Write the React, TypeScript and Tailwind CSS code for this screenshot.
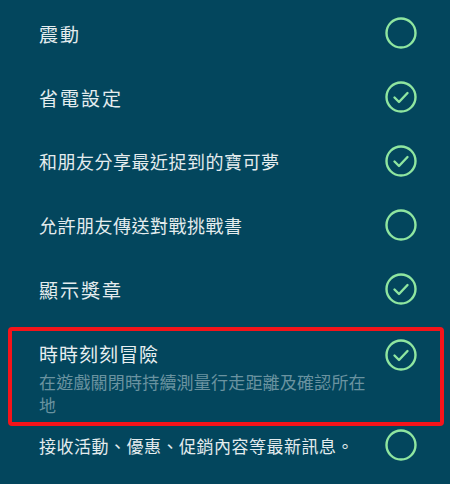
import React from "react";

const font = { fontFamily: '"Noto Sans CJK TC", "Noto Sans CJK SC", sans-serif' };

function Toggle({ on }: { on: boolean }) {
  return (
    <svg width="32" height="32" viewBox="0 0 32 32" className="shrink-0">
      <circle cx="16" cy="16" r="14.5" fill="none" stroke="#8fe6a0" strokeWidth="2.4" />
      {on && (
        <path d="M9.5 16.5 L14 21 L22.5 12" fill="none" stroke="#8fe6a0" strokeWidth="2.4" strokeLinecap="round" strokeLinejoin="round" />
      )}
    </svg>
  );
}

function Row({ label, on, cls }: { label: string; on: boolean; cls: string }) {
  return (
    <div className="h-[64px] flex items-center justify-between pl-[39px] pr-[33px]">
      <span className={`text-[#e4ecee] leading-none ${cls}`}>{label}</span>
      <Toggle on={on} />
    </div>
  );
}

export default function App() {
  return (
    <div className="w-[450px] h-[484px] bg-[#03465d] overflow-hidden pt-[1px]" style={font}>
      <Row label="震動" on={false} cls="text-[19px] tracking-[2px]" />
      <Row label="省電設定" on={true} cls="text-[19px] tracking-[2px]" />
      <Row label="和朋友分享最近捉到的寶可夢" on={true} cls="text-[18px] tracking-[0.5px]" />
      <Row label="允許朋友傳送對戰挑戰書" on={false} cls="text-[18px] tracking-[0.5px]" />
      <Row label="顯示獎章" on={true} cls="text-[19px] tracking-[2px]" />
      <div className="mt-[6px] ml-[8px] mr-[6px] border-[4px] border-[#f5141a] rounded-[4px] pl-[27px] pr-[23px] pt-[8px] pb-[6px] flex justify-between items-start">
        <div>
          <div className="text-[19px] tracking-[1px] leading-[30px] text-[#e8eff1]">時時刻刻冒險</div>
          <div className="w-[340px] text-[17px] tracking-[0.2px] leading-[23px] text-[#6a93a0] mt-[1px]">
            在遊戲關閉時持續測量行走距離及確認所在地
          </div>
        </div>
        <div className="mt-0">
          <Toggle on={true} />
        </div>
      </div>
      <div className="h-[38px] flex items-center justify-between pl-[39px] pr-[33px]">
        <span className="text-[#e4ecee] leading-none text-[17px] tracking-[0.5px]">接收活動、優惠、促銷內容等最新訊息。</span>
        <Toggle on={false} />
      </div>
    </div>
  );
}
